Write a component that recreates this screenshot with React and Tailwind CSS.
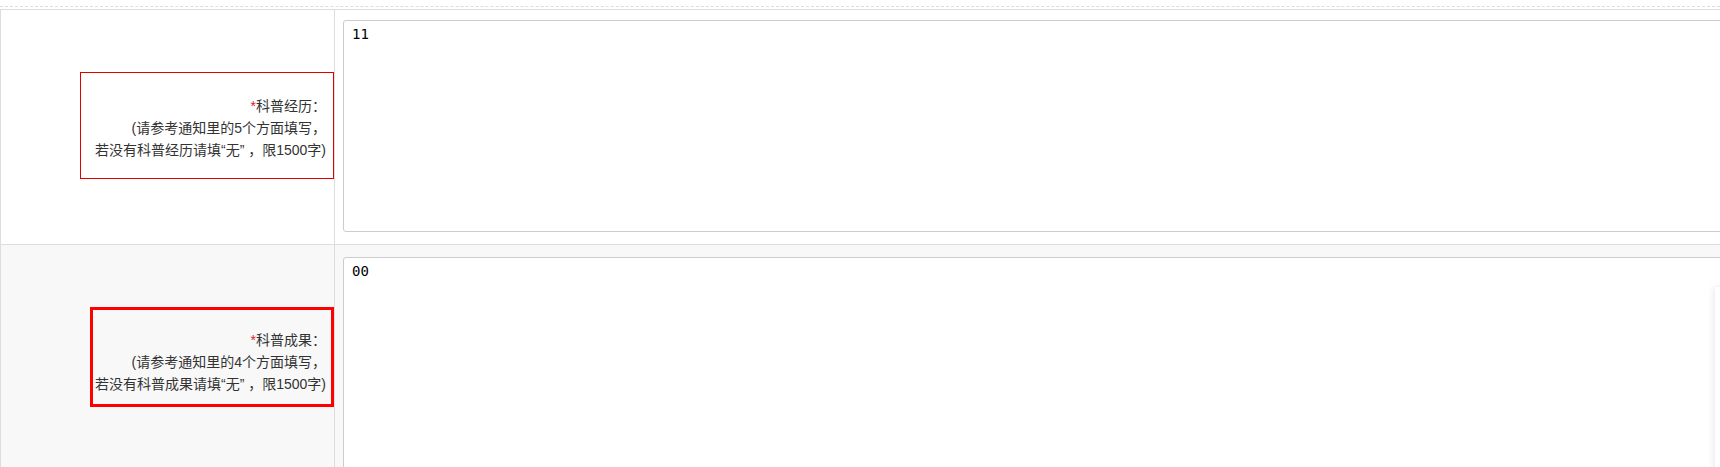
import React from "react";

const labelFont = "font-['Liberation_Sans','Noto_Sans_CJK_SC',sans-serif]";

function Label({ title, count, name, boxClass }) {
  return (
    <div className={`text-right text-[14px] leading-[22px] text-[#333] ${labelFont} ${boxClass}`}>
      <div>
        <span className="text-[#e02020]">*</span>
        {title}：
      </div>
      <div>(请参考通知里的{count}个方面填写，</div>
      <div>若没有{name}请填“无” ，限1500字)</div>
    </div>
  );
}

export default function App() {
  return (
    <div className="relative w-[1720px] h-[467px] overflow-hidden bg-white">
      <div className="pt-[6px]">
        <div className="border-t border-dashed border-[#dddddd]" />
      </div>
      <div className="mt-[2px] w-[1800px] border-t border-[#dddddd]">
        {/* row 1 */}
        <div className="grid grid-cols-[335px_1fr] border-b border-[#dddddd] bg-white">
          <div className="flex items-center justify-end border-l border-r border-[#dddddd] pb-[3px]">
            <Label
              title="科普经历"
              count="5"
              name="科普经历"
              boxClass="w-[254px] border border-[#e00000] pt-[22px] pb-[17px] pr-[7px]"
            />
          </div>
          <div className="pl-[8px] pt-[10px] pb-[12px]">
            <textarea
              defaultValue="11"
              className="block w-full h-[212px] resize-none rounded-[3px] border border-[#cccccc] bg-white px-[8px] py-[4px] font-['DejaVu_Sans_Mono',monospace] text-[14px] leading-[18px] text-black outline-none"
            />
          </div>
        </div>
        {/* row 2 */}
        <div className="grid grid-cols-[335px_1fr] border-b border-[#dddddd] bg-[#f8f8f8]">
          <div className="flex items-center justify-end border-l border-r border-[#dddddd] pb-[12px]">
            <Label
              title="科普成果"
              count="4"
              name="科普成果"
              boxClass="w-[244px] border-[3px] border-[#ff0000] pt-[19px] pb-[9px] pr-[5px]"
            />
          </div>
          <div className="pl-[8px] pt-[12px] pb-[12px]">
            <textarea
              defaultValue="00"
              className="block w-full h-[212px] resize-none rounded-[3px] border border-[#cccccc] bg-white px-[8px] py-[4px] font-['DejaVu_Sans_Mono',monospace] text-[14px] leading-[18px] text-black outline-none"
            />
          </div>
        </div>
      </div>
      {/* partially visible floating panel at the right edge */}
      <div className="absolute left-[1715px] top-[287px] w-[40px] h-[200px] bg-white shadow-[-2px_0_6px_rgba(0,0,0,0.08)]" />
    </div>
  );
}
